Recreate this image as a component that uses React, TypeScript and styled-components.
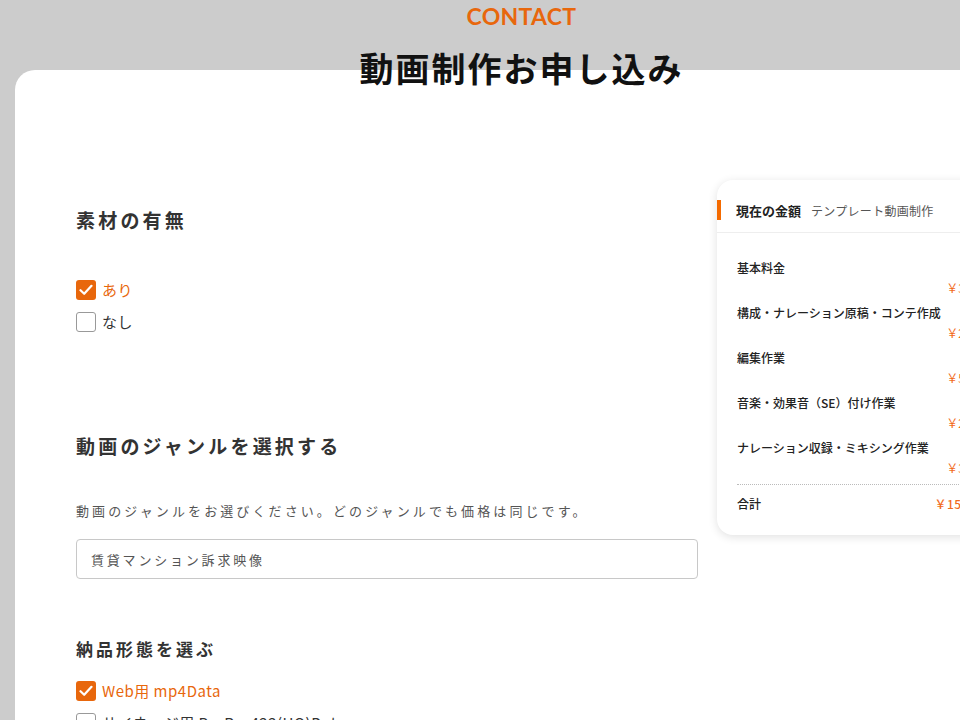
import styled, { createGlobalStyle } from 'styled-components'

const orange = '#e8670c'

const GlobalStyle = createGlobalStyle`
  html, body {
    margin: 0;
    padding: 0;
    background: #cccccc;
    overflow: hidden;
  }
  body {
    width: 960px;
    height: 720px;
    font-family: "Noto Sans CJK JP", "Noto Sans", sans-serif;
    color: #333;
  }
`

const Page = styled.div`
  width: 1013px;
  margin-left: 15px;
`

const Header = styled.header`
  height: 70px;
  padding-top: 4px;
  box-sizing: border-box;
  text-align: center;
`

const Eyebrow = styled.div`
  font-family: Lato, "Liberation Sans", sans-serif;
  font-weight: 700;
  font-size: 23px;
  line-height: 24px;
  color: ${orange};
  letter-spacing: 0.3px;
`

const Title = styled.h1`
  margin: 18px 0 0;
  height: 44px;
  font-size: 34px;
  line-height: 44px;
  font-weight: 700;
  letter-spacing: 2px;
  color: #111;
`

const Card = styled.main`
  background: #fff;
  border-radius: 20px 20px 0 0;
  padding: 110px 0 0 61px;
  min-height: 700px;
  box-sizing: border-box;
  display: grid;
  grid-template-columns: 622px 300px;
  column-gap: 19px;
  align-items: start;
`

const FormColumn = styled.div`
  display: flex;
  flex-direction: column;
`

const SectionTitle = styled.h2<{ $size?: number; $top: number }>`
  margin: ${p => p.$top}px 0 0;
  font-size: ${p => p.$size ?? 19}px;
  line-height: 28px;
  font-weight: 700;
  letter-spacing: ${p => (p.$size ? 3 : 3.2)}px;
  color: #333;
`

const CheckList = styled.div<{ $top: number }>`
  margin-top: ${p => p.$top}px;
  display: flex;
  flex-direction: column;
  gap: 12px;
`

const CheckRow = styled.label<{ $checked?: boolean }>`
  display: flex;
  align-items: center;
  gap: 6px;
  height: 20px;
  font-size: 15px;
  line-height: 20px;
  color: ${p => (p.$checked ? orange : '#333')};
  letter-spacing: 0.5px;
`

const Box = styled.span<{ $checked?: boolean }>`
  width: 20px;
  height: 20px;
  box-sizing: border-box;
  border-radius: 3px;
  border: ${p => (p.$checked ? 'none' : '1.5px solid #999')};
  background: ${p => (p.$checked ? orange : '#fff')};
  display: flex;
  align-items: center;
  justify-content: center;
  flex-shrink: 0;
`

const Note = styled.p`
  margin: 40px 0 0;
  font-size: 13px;
  line-height: 22px;
  letter-spacing: 3.1px;
  color: #555;
`

const TextField = styled.div`
  margin-top: 17px;
  height: 40px;
  box-sizing: border-box;
  border: 1px solid #c8c8c8;
  border-radius: 4px;
  padding: 0 14px;
  display: flex;
  align-items: center;
  font-size: 13px;
  letter-spacing: 2.8px;
  color: #555;
`

const Summary = styled.aside`
  background: #fff;
  border-radius: 16px;
  box-shadow: 0 2px 10px rgba(0, 0, 0, 0.12);
  padding-bottom: 21px;
`

const SummaryHead = styled.div`
  height: 53px;
  box-sizing: border-box;
  border-bottom: 1px solid #eee;
  display: flex;
  align-items: center;
  gap: 10px;
  padding: 8px 20px 0 19px;
  position: relative;
  &::before {
    content: '';
    position: absolute;
    left: 0;
    top: 20px;
    width: 4px;
    height: 20px;
    background: #f46a00;
  }
`

const HeadMain = styled.span`
  font-size: 13px;
  font-weight: 700;
  color: #222;
`

const HeadSub = styled.span`
  font-size: 12px;
  color: #555;
  letter-spacing: 0.3px;
`

const ItemList = styled.div`
  margin-left: 20px;
  padding: 25px 22px 1px 0;
  border-bottom: 1px dotted #bbb;
`

const Item = styled.div`
  margin-bottom: 5px;
`

const ItemLabel = styled.div`
  font-size: 12px;
  line-height: 20px;
  font-weight: 500;
  color: #222;
`

const Price = styled.div`
  font-size: 12px;
  line-height: 20px;
  text-align: right;
  color: #f26b1d;
`

const TotalRow = styled.div`
  display: flex;
  justify-content: space-between;
  padding: 9px 22px 0 20px;
  font-size: 12px;
  line-height: 20px;
  font-weight: 500;
  color: #222;
`

const TotalPrice = styled.span`
  font-size: 12px;
  color: #f26b1d;
  letter-spacing: 0.5px;
`

const Check = () => (
  <svg width="14" height="12" viewBox="0 0 14 12" fill="none">
    <path d="M1.5 6.2 L5.2 9.8 L12.5 1.8" stroke="#fff" strokeWidth="2.2" strokeLinecap="round" strokeLinejoin="round" />
  </svg>
)

const Option = ({ label, checked }: { label: string; checked?: boolean }) => (
  <CheckRow $checked={checked}>
    <Box $checked={checked}>{checked && <Check />}</Box>
    {label}
  </CheckRow>
)

const items = [
  { label: '基本料金', price: '￥30,000' },
  { label: '構成・ナレーション原稿・コンテ作成', price: '￥20,000' },
  { label: '編集作業', price: '￥50,000' },
  { label: '音楽・効果音（SE）付け作業', price: '￥20,000' },
  { label: 'ナレーション収録・ミキシング作業', price: '￥30,000' },
]

const App = () => {
  return (
    <Page>
      <GlobalStyle />
      <Header>
        <Eyebrow>CONTACT</Eyebrow>
        <Title>動画制作お申し込み</Title>
      </Header>
      <Card>
        <FormColumn>
          <SectionTitle $top={26}>素材の有無</SectionTitle>
          <CheckList $top={46}>
            <Option label="あり" checked />
            <Option label="なし" />
          </CheckList>

          <SectionTitle $top={100}>動画のジャンルを選択する</SectionTitle>
          <Note>動画のジャンルをお選びください。どのジャンルでも価格は同じです。</Note>
          <TextField>賃貸マンション訴求映像</TextField>

          <SectionTitle $top={56} $size={17}>納品形態を選ぶ</SectionTitle>
          <CheckList $top={18}>
            <Option label="Web用 mp4Data" checked />
            <Option label="サイネージ用 ProRes422(HQ)Data" />
          </CheckList>
        </FormColumn>

        <Summary>
          <SummaryHead>
            <HeadMain>現在の金額</HeadMain>
            <HeadSub>テンプレート動画制作</HeadSub>
          </SummaryHead>
          <ItemList>
            {items.map(it => (
              <Item key={it.label}>
                <ItemLabel>{it.label}</ItemLabel>
                <Price>{it.price}</Price>
              </Item>
            ))}
          </ItemList>
          <TotalRow>
            <span>合計</span>
            <TotalPrice>￥150,000</TotalPrice>
          </TotalRow>
        </Summary>
      </Card>
    </Page>
  )
}

export default App
